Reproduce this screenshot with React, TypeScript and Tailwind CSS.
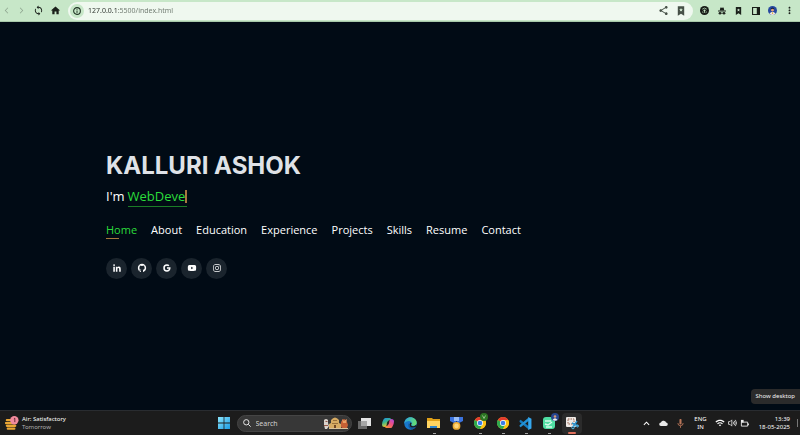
import type { ReactNode } from "react";
import {
  BiLogoGithub,
  BiLogoGoogle,
  BiLogoInstagram,
  BiLogoLinkedin,
  BiLogoYoutube,
} from "react-icons/bi";
import {
  MdArrowBackIosNew,
  MdArrowForwardIos,
  MdHome,
  MdMoreVert,
  MdShare,
  MdSync,
  MdWifi,
} from "react-icons/md";

function ToolButton({ label, children }: { label: string; children: ReactNode }) {
  return (
    <button type="button" aria-label={label} className="flex h-5 w-[17px] shrink-0 items-center justify-center">
      {children}
    </button>
  );
}

function Bookmark({ className }: { className: string }) {
  return (
    <svg viewBox="0 0 10 12" className={className} aria-hidden="true">
      <path d="M1 0h8v12L5 9.500 1 12z" fill="currentColor" />
      <path d="M5 2.200l.7 1.500 1.500.2-1.100 1.100.3 1.600L5 5.800l-1.400.8.3-1.600-1.100-1.100 1.500-.2z" fill="#d9efda" />
    </svg>
  );
}

function BrowserBar() {
  return (
    <header className="flex h-[22px] shrink-0 items-center border-b border-[#a8c9aa] bg-[#c7e7c8] pr-[2px] text-[#1b211b]">
      <div className="flex w-[68px] shrink-0 items-center justify-between pr-1">
        <button type="button" aria-label="Back" className="flex h-5 w-3 items-center justify-center text-[#8da48e]">
          <MdArrowBackIosNew size={7} />
        </button>
        <button type="button" aria-label="Forward" className="flex h-5 w-4 items-center justify-center text-[#8da48e]">
          <MdArrowForwardIos size={7} />
        </button>
        <button type="button" aria-label="Reload" className="flex h-5 w-4 items-center justify-center">
          <MdSync size={11} />
        </button>
        <button type="button" aria-label="Home page" className="flex h-5 w-4 items-center justify-center">
          <MdHome size={11} />
        </button>
      </div>
      <div className="flex h-[18px] min-w-0 flex-1 items-center rounded-full bg-[#eff8ef] pr-1 pl-[2px]">
        <button
          type="button"
          aria-label="Site information"
          className="flex size-[14px] shrink-0 items-center justify-center rounded-full bg-[#c7e7c8]"
        >
          <svg viewBox="0 0 10 10" className="size-2" aria-hidden="true">
            <circle cx="5" cy="5" r="4.200" fill="none" stroke="#1d3020" strokeWidth="1.300" />
            <path d="M5 4.400v3M5 2.400v1.100" stroke="#1d3020" strokeWidth="1.200" />
          </svg>
        </button>
        <input
          aria-label="Address"
          defaultValue="127.0.0.1:5500/index.html"
          className="ml-1 h-[18px] min-w-0 flex-1 bg-[linear-gradient(90deg,#2a302b_29px,#6d786e_29px)] bg-clip-text font-['Noto_Sans','Open_Sans',sans-serif] text-[7px] leading-[18px] text-transparent caret-[#2a302b] outline-none"
        />
        <ToolButton label="Share">
          <MdShare size={11} color="#465047" />
        </ToolButton>
        <ToolButton label="Bookmark this page">
          <Bookmark className="h-[10px] w-2 text-[#465047]" />
        </ToolButton>
      </div>
      <div className="ml-[3px] flex shrink-0">
        <ToolButton label="Page extension">
          <svg viewBox="0 0 10 10" className="size-[9px]" aria-hidden="true">
            <circle cx="5" cy="5" r="5" fill="#161b16" />
            <path d="M2.500 3.500 5 2.300l2.500 1.200M5 5v2.700M2.300 6.400l1.500 1M7.700 6.400l-1.500 1" stroke="#a9c7aa" strokeWidth="1" fill="none" />
            <circle cx="5" cy="5" r="1.200" fill="#c7e7c8" />
          </svg>
        </ToolButton>
        <ToolButton label="Private browsing">
          <svg viewBox="0 0 10 10" className="size-2" fill="#1b211b" aria-hidden="true">
            <path d="m3 .5 2 .4L7 .5 7.800 4H2.200zM0 4.400h10v1.200H0z" />
            <circle cx="2.500" cy="7.800" r="1.700" />
            <circle cx="7.500" cy="7.800" r="1.700" />
            <path d="M4 7.300h2V8H4z" />
          </svg>
        </ToolButton>
        <ToolButton label="Reading list">
          <Bookmark className="h-2 w-[7px] text-[#1b211b]" />
        </ToolButton>
        <ToolButton label="Side panel">
          <svg viewBox="0 0 10 10" className="size-2" aria-hidden="true">
            <path d="M.7.7h8.600v8.600H.7z" fill="none" stroke="#1b211b" strokeWidth="1.400" />
            <path d="M6 1h3.500v8H6z" fill="#1b211b" />
          </svg>
        </ToolButton>
        <ToolButton label="Profile">
          <svg viewBox="0 0 10 10" className="size-[9px]" aria-hidden="true">
            <circle cx="5" cy="5" r="5" fill="#2749a0" />
            <path d="M1.500 8.500Q5 4.500 8.500 8.500 5 11.500 1.500 8.500" fill="#ece3df" />
            <circle cx="5" cy="4.300" r="1.800" fill="#dda07b" />
            <path d="M3 4Q3 1.800 5 1.800T7 4L5 3z" fill="#182343" />
            <path d="M4.500 7h1v2h-1z" fill="#e0ad34" />
          </svg>
        </ToolButton>
        <ToolButton label="More">
          <MdMoreVert size={11} />
        </ToolButton>
      </div>
    </header>
  );
}

const navItems = ["Home", "About", "Education", "Experience", "Projects", "Skills", "Resume", "Contact"];

const socials = [
  { name: "LinkedIn", Icon: BiLogoLinkedin },
  { name: "GitHub", Icon: BiLogoGithub },
  { name: "Google", Icon: BiLogoGoogle },
  { name: "YouTube", Icon: BiLogoYoutube },
  { name: "Instagram", Icon: BiLogoInstagram },
];

function Hero() {
  return (
    <main className="flex flex-1 flex-col justify-center bg-[#010b15] px-[106px] pb-1 font-['Open_Sans',sans-serif]">
      <h1 className="font-['Inter',sans-serif] text-[24px] leading-8 font-bold text-[#dfe2e7]">KALLURI ASHOK</h1>
      <h2 className="mt-[6px] flex items-start text-[13px] leading-[17px] text-white">
        <span className="mr-[3px]">I'm</span>
        <span className="flex border-b border-[#1a7c26] pb-[1px] text-[#2bdc3b]">
          WebDeve
          <span className="mt-[2px] h-[13px] w-[2px] bg-[#a9773f]" />
        </span>
      </h2>
      <nav aria-label="Main" className="mt-4">
        <ul className="flex gap-[14px] text-[11px] leading-[14px] text-white">
          {navItems.map((item, i) => (
            <li key={item}>
              <a href={"#" + item.toLowerCase()} className={i === 0 ? "block text-[#2bdc3b]" : "block"}>
                {item}
                {i === 0 && <span className="mt-[1px] block h-px w-[13px] bg-[#a8793c]" />}
              </a>
            </li>
          ))}
        </ul>
      </nav>
      <ul className="mt-[19px] flex gap-1">
        {socials.map(({ name, Icon }) => (
          <li key={name}>
            <a
              href={"#" + name.toLowerCase()}
              aria-label={name}
              className="flex size-[21px] items-center justify-center rounded-full bg-[#1a242d] text-white"
            >
              <Icon size={10} />
            </a>
          </li>
        ))}
      </ul>
    </main>
  );
}

function ChromeLogo() {
  return (
    <svg viewBox="0 0 24 24" className="size-3" aria-hidden="true">
      <circle cx="12" cy="12" r="12" fill="#fbc116" />
      <path d="M12 12 1.600 6A12 12 0 0 1 22.400 6z" fill="#e33b2e" />
      <path d="M1.600 6A12 12 0 0 0 12 24l5-9-5-3z" fill="#2da94f" />
      <path d="M12 6h10.400A12 12 0 0 1 12 24l5.200-9z" fill="#fbc116" />
      <circle cx="12" cy="12" r="6" fill="#fff" />
      <circle cx="12" cy="12" r="4.700" fill="#3b7de9" />
    </svg>
  );
}

function TaskButton({
  label,
  running = false,
  active = false,
  children,
}: {
  label: string;
  running?: boolean;
  active?: boolean;
  children: ReactNode;
}) {
  return (
    <button
      type="button"
      aria-label={label}
      className={
        active
          ? "relative flex h-[21px] w-5 items-center justify-center rounded-sm bg-[#2b2b2b]"
          : "relative flex h-[21px] w-5 items-center justify-center"
      }
    >
      {children}
      {running && <span className="absolute bottom-0 left-[9px] h-px w-[3px] bg-[#a3a3a3]" />}
      {active && <span className="absolute bottom-0 left-[6px] h-[2px] w-2 rounded-full bg-[#e0705c]" />}
    </button>
  );
}

function SearchArt() {
  return (
    <svg viewBox="0 0 26 14" className="h-[14px] w-[26px] shrink-0" aria-hidden="true">
      <path d="M1 4q2-2 4 0v3l1 3-2 3H2l-1-4z" fill="#d9d2cb" />
      <path d="M2.500 5h2v1h-2zM1 9h4v1H1z" fill="#93584a" />
      <path d="M6 13V8l2-1V4q4-5 8 0v3l2 1v5z" fill="#d6ab63" />
      <path d="M10 4h4v1h-4zM9 7h6v1H9z" fill="#99713b" />
      <path d="M11 9h2v4h-2z" fill="#6d4526" />
      <path d="M18 6q3-6 6 0l1 3-1 3-3 1-3-2z" fill="#c66035" />
      <path d="m19 3 2 2 3-2-1 4h-3z" fill="#e9a065" />
      <path d="M6 12h19v1H6z" fill="#d9c29b" />
    </svg>
  );
}

function Taskbar() {
  return (
    <footer className="relative grid h-[25px] shrink-0 grid-cols-[1fr_auto_1fr] items-center border-t border-[#292c30] bg-[#1c1c1c] font-['Noto_Sans','Open_Sans',sans-serif] text-white">
      <button type="button" className="flex items-center gap-[3px] justify-self-start pl-[5px] text-left">
        <svg viewBox="0 0 15 17" className="h-[17px] w-[14px]" aria-hidden="true">
          <path d="M2 5h8M1 8h10M2 11h9M3 14h7" stroke="#e9a534" strokeWidth="2.400" strokeLinecap="round" />
          <circle cx="10" cy="5" r="4.500" fill="#f28a9d" />
          <path d="m9.500 3.500 1-.7V7" stroke="#5d2332" fill="none" />
        </svg>
        <span className="text-[6px] leading-2">
          <span className="block">Air: Satisfactory</span>
          <span className="block text-[#b0b0b0]">Tomorrow</span>
        </span>
      </button>

      <div className="flex items-center gap-[3px] pr-[5px]">
        <TaskButton label="Start">
          <svg viewBox="0 0 12 12" className="size-3" aria-hidden="true">
            <defs>
              <linearGradient id="start" x2="1" y2="1">
                <stop stopColor="#8be5fb" />
                <stop offset="1" stopColor="#1b9be4" />
              </linearGradient>
            </defs>
            <path d="M0 0h5.600v5.600H0zM6.400 0H12v5.600H6.400zM0 6.400h5.600V12H0zM6.400 6.400H12V12H6.400z" fill="url(#start)" />
          </svg>
        </TaskButton>
        <label className="flex h-[17px] w-[115px] items-center rounded-full border border-[#454545] bg-[#373737] pr-[2px] pl-[5px]">
          <svg viewBox="0 0 9 9" className="size-2 shrink-0" fill="none" stroke="#e8e8e8" strokeWidth="1.100" aria-hidden="true">
            <circle cx="3.700" cy="3.700" r="3" />
            <path d="m6 6 2.600 2.600" />
          </svg>
          <input
            aria-label="Search"
            placeholder="Search"
            className="ml-[5px] h-[15px] w-0 min-w-0 flex-1 bg-transparent text-[7px] leading-[15px] outline-none placeholder:text-[#d0d0d0]"
          />
          <SearchArt />
        </label>
        <TaskButton label="Task view">
          <svg viewBox="0 0 13 12" className="h-3 w-[13px]" aria-hidden="true">
            <path d="M0 4h9v8H0z" fill="#686868" />
            <path d="M3 1h10v8H3z" fill="#e2e2e2" />
            <path d="M3 4h6v5H3z" fill="#a6a6a6" />
          </svg>
        </TaskButton>
        <TaskButton label="Copilot">
          <svg viewBox="0 0 24 24" className="size-3" aria-hidden="true">
            <defs>
              <linearGradient id="copilotA" x2=".4" y2="1">
                <stop stopColor="#1d8eea" />
                <stop offset=".5" stopColor="#3cb58b" />
                <stop offset="1" stopColor="#f5cd2b" />
              </linearGradient>
              <linearGradient id="copilotB" x1="1" x2=".3" y2="1">
                <stop stopColor="#a64be5" />
                <stop offset=".5" stopColor="#ee4e84" />
                <stop offset="1" stopColor="#f58b3b" />
              </linearGradient>
            </defs>
            <path d="M7 2h8q3 0 4 4h-4q-2 0-3 3l-3 8q-1 3-4 3-5 0-5-5 0-5 3-10 1-3 4-3z" fill="url(#copilotA)" />
            <path d="M17 22H9q-3 0-4-4h4q2 0 3-3l3-8q1-3 4-3 5 0 5 5 0 5-3 10-1 3-4 3z" fill="url(#copilotB)" />
            <path d="M11 9h4l-2 6H9z" fill="#232323" />
          </svg>
        </TaskButton>
        <TaskButton label="Edge">
          <svg viewBox="0 0 24 24" className="size-[13px]" aria-hidden="true">
            <defs>
              <linearGradient id="edge" x2="1" y2=".3">
                <stop stopColor="#279fe5" />
                <stop offset="1" stopColor="#64dc77" />
              </linearGradient>
            </defs>
            <circle cx="12" cy="12" r="11.500" fill="#1878cb" />
            <path d="M.5 12C1 5 6 .5 12 .5S24 5 23.500 11c0 4-4 6-8 5-3-1-2-2-1-4 0-5-8-7-14 0z" fill="url(#edge)" />
            <path d="M9 11q-4 9 6 12 5-1 7-5-7 3-11-1-2-2-2-6z" fill="#15569c" />
            <path d="M14 12q-3 5 3 5 3 0 6-3l-1 4q-8 3-11-1-2-4 1-7 2 0 2 2z" fill="#1c1c1c" />
          </svg>
        </TaskButton>
        <TaskButton label="File Explorer" running>
          <svg viewBox="0 0 13 12" className="h-3 w-[13px]" aria-hidden="true">
            <path d="M0 1h5l1 1h7v9H0z" fill="#dfa018" />
            <path d="M0 4h13v7H0z" fill="#ffd461" />
            <path d="M3 9h7v2H3z" fill="#2f85cc" />
          </svg>
        </TaskButton>
        <TaskButton label="Rewards">
          <svg viewBox="0 0 13 13" className="size-[13px]" aria-hidden="true">
            <path d="M0 0h4l3 6H4L0 4zM13 0H9L6 6h3l4-2z" fill="#3b73df" />
            <path d="M4 0h5v4H4z" fill="#98bdf7" />
            <circle cx="6.500" cy="8.900" r="3.900" fill="#edac35" />
            <circle cx="6.500" cy="8.900" r="2.300" fill="#ffd579" />
          </svg>
        </TaskButton>
        <TaskButton label="Chrome, profile V" running>
          <ChromeLogo />
          <span className="absolute top-0 right-[2px] flex size-2 items-center justify-center rounded-full bg-[#2c7522] text-[#a8cf9f]">
            <svg viewBox="0 0 8 8" className="size-2" aria-hidden="true">
              <path d="m2.500 2.500 1.500 3 1.500-3" fill="none" stroke="currentColor" strokeWidth=".8" />
            </svg>
          </span>
        </TaskButton>
        <TaskButton label="Chrome" running>
          <ChromeLogo />
        </TaskButton>
        <TaskButton label="Visual Studio Code" running>
          <svg viewBox="0 0 24 24" className="size-[13px]" aria-hidden="true">
            <path d="m1 7 2-2 15 12v6L1 9z" fill="#157bc0" />
            <path d="m1 17 2 2L18 7V1L1 15z" fill="#2291d6" />
            <path d="m17 0 6 3v18l-6 3z" fill="#35a7ee" />
          </svg>
        </TaskButton>
        <TaskButton label="Messages" running>
          <svg viewBox="0 0 14 14" className="size-[14px]" aria-hidden="true">
            <rect x="1" y="1" width="12" height="12" rx="3" fill="#4fdda2" />
            <path d="M3 5h6M3 8l3 1 4-3M4 11h6" stroke="#d4faea" strokeWidth="1.400" fill="none" />
          </svg>
          <svg viewBox="0 0 8 8" className="absolute top-0 right-0 size-2" aria-hidden="true">
            <circle cx="4" cy="4" r="4" fill="#28468e" />
            <circle cx="4" cy="3.500" r="1.300" fill="#d49a76" />
            <path d="M1.500 7Q4 3.500 6.500 7 4 8.500 1.500 7" fill="#eee" />
          </svg>
        </TaskButton>
        <TaskButton label="Snipping Tool" active>
          <svg viewBox="0 0 14 14" className="size-[14px]" aria-hidden="true">
            <rect x="1" y="1" width="10" height="10" rx="1" fill="#eee9e5" />
            <path d="M3 3h6v5H3z" fill="none" stroke="#996451" strokeDasharray="1.500 1" />
            <path d="m7 7 6 3M8 11l4-6" stroke="#2c91cc" strokeWidth="1.400" />
            <circle cx="8" cy="11.500" r="1.300" fill="none" stroke="#51b6e7" />
            <circle cx="12.500" cy="10" r="1" fill="none" stroke="#51b6e7" />
          </svg>
        </TaskButton>
      </div>

      <div className="flex items-center justify-self-end pr-[2px] text-[6px] leading-2">
        <ToolButton label="Hidden icons">
          <svg viewBox="0 0 8 8" className="size-[7px]" fill="none" stroke="#fff" strokeWidth="1.200" aria-hidden="true">
            <path d="m1 5.500 3-3 3 3" />
          </svg>
        </ToolButton>
        <ToolButton label="OneDrive">
          <svg viewBox="0 0 10 7" className="h-[6px] w-[9px]" aria-hidden="true">
            <path d="M2 7a2 2 0 0 1 0-4Q3 0 5.500 1T8 3q2 0 2 2T8 7z" fill="#e9e9e9" />
          </svg>
        </ToolButton>
        <ToolButton label="Microphone">
          <svg viewBox="0 0 8 10" className="h-[9px] w-[7px]" fill="none" stroke="#b87558" aria-hidden="true">
            <path d="M4 1v4" strokeWidth="2.400" strokeLinecap="round" />
            <path d="M1 4.500q0 3 3 3t3-3M4 7.500V10" />
          </svg>
        </ToolButton>
        <button type="button" className="mr-[3px] w-[23px] text-center">
          ENG
          <br />
          IN
        </button>
        <button type="button" aria-label="Network, sound and battery" className="flex items-center gap-[3px]">
          <MdWifi size={10} />
          <svg viewBox="0 0 10 9" className="h-2 w-[9px]" fill="none" stroke="#e5e5e5" strokeWidth=".9" aria-hidden="true">
            <path d="M.5 3h1.700l2-2v7l-2-2H.5zM5.700 3q1 1.500 0 3M7 2q2 2.500 0 5M8.200 1q2.800 3.500 0 7" />
          </svg>
          <svg viewBox="0 0 10 9" className="h-2 w-[9px]" aria-hidden="true">
            <path d="M1.500 3.500h7v4.500h-7zM9.500 5v2" fill="none" stroke="#ededed" />
            <path d="M1 1h3v3H1z" fill="#ededed" />
          </svg>
        </button>
        <button type="button" className="ml-2 w-[33px] text-right whitespace-nowrap">
          13:39
          <br />
          18-05-2025
        </button>
        <button type="button" aria-label="Show desktop" className="ml-[7px] h-2 w-px bg-[#777]" />
      </div>
      <div
        role="tooltip"
        className="absolute right-0 bottom-[31px] rounded-l-sm bg-[#2b2b2b] px-[5px] text-[6px] leading-[15px] whitespace-nowrap text-[#f1f1f1]"
      >
        Show desktop
      </div>
    </footer>
  );
}

export default function App() {
  return (
    <div className="flex min-h-screen flex-col">
      <BrowserBar />
      <Hero />
      <Taskbar />
    </div>
  );
}
